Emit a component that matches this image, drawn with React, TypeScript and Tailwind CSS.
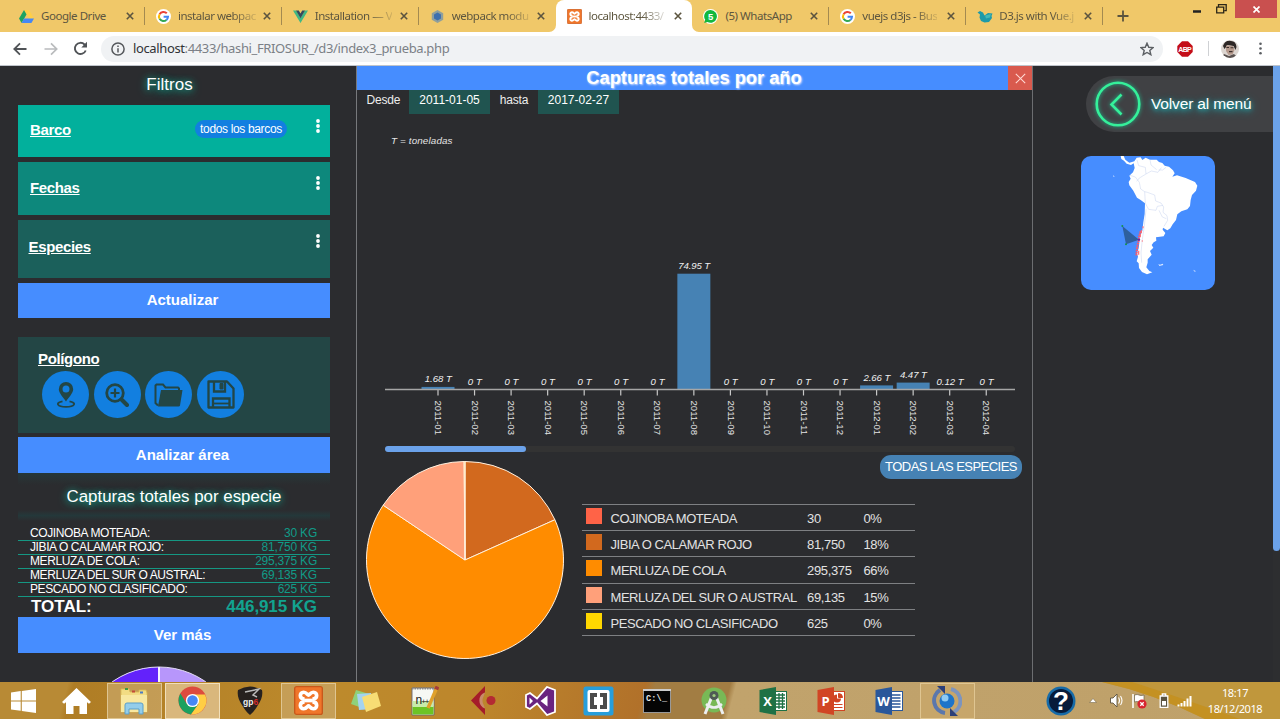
import React from "react";

const ARIAL = "font-['Liberation_Sans',Arial,sans-serif]";

/* ---------- browser chrome ---------- */

function GoogleIcon() {
  return (
    <svg width="15" height="15" viewBox="0 0 15 15">
      <circle cx="7.5" cy="7.5" r="7.5" fill="#fff" />
      <g fill="none" strokeWidth="2">
        <path d="M3.6 5.2A4.5 4.5 0 0 1 10.8 4.3" stroke="#ea4335" />
        <path d="M3.6 5.2A4.5 4.5 0 0 0 3.6 9.8" stroke="#fbbc05" />
        <path d="M3.6 9.8A4.5 4.5 0 0 0 10.4 10.9" stroke="#34a853" />
        <path d="M10.4 10.9A4.5 4.5 0 0 0 12 7.7H7.6" stroke="#4285f4" />
      </g>
    </svg>
  );
}

function DriveIcon() {
  return (
    <svg width="15" height="15" viewBox="0 0 15 15">
      <path d="M5 1h5l5 8.6h-5z" fill="#ffcf48" />
      <path d="M5 1l2.5 4.4L2.6 14 0 9.6z" fill="#1da362" />
      <path d="M5 9.6h10L12.4 14H2.6z" fill="#4687f4" />
    </svg>
  );
}

function VueIcon() {
  return (
    <svg width="15" height="15" viewBox="0 0 15 15">
      <path d="M0 1.5h3.2L7.5 9l4.3-7.5H15L7.5 14z" fill="#41b883" />
      <path d="M3 1.5h2.8l1.7 3 1.7-3H12L7.5 9.3z" fill="#35495e" />
    </svg>
  );
}

function WebpackIcon() {
  return (
    <svg width="15" height="15" viewBox="0 0 15 15">
      <path d="M7.5 1l5.7 3.2v6.6L7.5 14l-5.7-3.2V4.2z" fill="#8f9f9c" />
      <path d="M7.5 3.6l3.5 2v3.900l-3.500 2-3.500-2V5.600z" fill="#3e6fae" />
    </svg>
  );
}

function XamppIcon({ size }: { size: number }) {
  return (
    <svg width={size} height={size} viewBox="0 0 30 30">
      <rect x="0.700" y="0.700" width="28.600" height="28.600" rx="2" fill="#f0762a" stroke="#c9581a" strokeWidth="1.400" />
      <g fill="none" stroke="#fff" strokeWidth="3.800" strokeLinejoin="round">
        <path d="M11 13.500C5 13.500 5.500 6.500 10 6.500c3 0 4 3 5 3s2-3 5-3c4.500 0 5 7-1 7" />
        <path d="M11 16.500c-6 0-5.500 7-1 7 3 0 4-3 5-3s2 3 5 3c4.500 0 5-7-1-7" />
        <path d="M10.500 15h9" />
      </g>
    </svg>
  );
}

function WhatsIcon() {
  return (
    <svg width="15" height="15" viewBox="0 0 15 15">
      <circle cx="7.500" cy="7.500" r="7.500" fill="#fff" />
      <path d="M7.600 1a6.400 6.400 0 1 1-3.200 12L1.200 14l1-3.200A6.400 6.400 0 0 1 7.600 1z" fill="#12b83f" />
      <text x="7.600" y="11" textAnchor="middle" fontSize="9.500" fontWeight="700" fill="#fff" fontFamily="Liberation Sans">5</text>
    </svg>
  );
}

function BirdIcon() {
  return (
    <svg width="16" height="15" viewBox="0 0 16 15">
      <path d="M0.500 3.500L3 2l3 1.500 1.500 3L11 4l4.500 0.500-1 2.500 0.500 2-3 4-4.500 0.500L4 12 2.500 8.500 3 5.500z" fill="#1e9aa8" />
      <path d="M8 6.500l6-1.500-1 3.500-4 1z" fill="#45b9b6" />
    </svg>
  );
}

const tabs: { title: string; icon: React.ReactNode; active?: boolean; fade: boolean; sep: boolean }[] = [
  { title: "Google Drive", icon: <DriveIcon />, fade: false, sep: true },
  { title: "instalar webpac", icon: <GoogleIcon />, fade: true, sep: true },
  { title: "Installation — V", icon: <VueIcon />, fade: true, sep: true },
  { title: "webpack modu", icon: <WebpackIcon />, fade: true, sep: false },
  { title: "localhost:4433/", icon: <XamppIcon size={15} />, active: true, fade: true, sep: false },
  { title: "(5) WhatsApp", icon: <WhatsIcon />, fade: false, sep: true },
  { title: "vuejs d3js - Bus", icon: <GoogleIcon />, fade: true, sep: true },
  { title: "D3.js with Vue.j", icon: <BirdIcon />, fade: true, sep: true },
];

function TabStrip() {
  return (
    <div className="flex h-8 shrink-0 items-start bg-[#f0c869] pl-2">
      {tabs.map((t) => (
        <div
          key={t.title}
          className={
            t.active
              ? "relative flex h-8 w-[136.900px] shrink-0 items-center rounded-t-lg bg-white pl-[11px]"
              : "relative flex h-8 w-[136.900px] shrink-0 items-center pl-[11px]"
          }
        >
          <span className="flex w-[22px] shrink-0">{t.icon}</span>
          <span className="w-[77px] text-[11.500px] whitespace-nowrap text-[#5d563f]">
            <span
              className={
                t.fade
                  ? "inline-block tracking-[-0.480px] [mask-image:linear-gradient(to_right,black_70%,rgba(0,0,0,0.2))]"
                  : "inline-block tracking-[-0.450px]"
              }
            >
              {t.title}
            </span>
          </span>
          <svg width="8" height="8" viewBox="0 0 8 8" className="ml-2">
            <path d="M0.800 0.800l6.400 6.400M7.200 0.800L0.800 7.200" stroke="#5b543f" strokeWidth="1.600" />
          </svg>
          {t.sep && <span className="absolute top-[7px] right-0 h-[18px] w-px bg-[#a38a50]" />}
          {t.active && (
            <>
              <svg className="absolute bottom-0 left-[-7px]" width="7" height="7" viewBox="0 0 7 7">
                <path d="M7 0v7H0a7 7 0 0 0 7-7z" fill="#fff" />
              </svg>
              <svg className="absolute right-[-7px] bottom-0" width="7" height="7" viewBox="0 0 7 7">
                <path d="M0 0v7h7a7 7 0 0 1-7-7z" fill="#fff" />
              </svg>
            </>
          )}
        </div>
      ))}
      <svg width="12" height="12" viewBox="0 0 12 12" className="mt-[10px] ml-[14px]">
        <path d="M6 0.500v11M0.500 6h11" stroke="#5b543f" strokeWidth="1.800" />
      </svg>
      <div className="ml-auto flex h-[18px] items-center">
        <svg width="8" height="3" viewBox="0 0 8 3" className="mt-1 mr-[15px]">
          <path d="M0 1.500h8" stroke="#222" strokeWidth="2.500" />
        </svg>
        <svg width="11" height="10" viewBox="0 0 11 10" className="mr-2">
          <path d="M2.500 2.500V0.700h7.700v6H8.500M0.700 3.200h7v5.600h-7z" fill="none" stroke="#2b2618" strokeWidth="1.300" />
        </svg>
        <div className="flex h-[18px] w-[42px] items-center justify-center bg-[#c9504f]">
          <svg width="7" height="7" viewBox="0 0 7 7">
            <path d="M0.500 0.500l6 6M6.500 0.500l-6 6" stroke="#fff" strokeWidth="1.700" />
          </svg>
        </div>
        <div className="w-[3px]" />
      </div>
    </div>
  );
}

function Toolbar() {
  return (
    <div className="flex h-[34px] shrink-0 items-center border-b border-[#bfc4cb] bg-white pl-[13px]">
      <svg width="14" height="14" viewBox="0 0 14 14" fill="none" stroke="#505357" strokeWidth="1.800">
        <path d="M13.500 7H1.500M7 1.300L1.300 7 7 12.700" />
      </svg>
      <svg width="14" height="14" viewBox="0 0 14 14" className="ml-[17px]" fill="none" stroke="#b9bbbd" strokeWidth="1.700">
        <path d="M0.500 7h12M7 1.300L12.700 7 7 12.700" />
      </svg>
      <svg width="15" height="15" viewBox="0 0 15 15" className="ml-[15px]" fill="none">
        <path d="M12.700 9.500A5.600 5.600 0 1 1 11.500 3.500L13 5" stroke="#505357" strokeWidth="1.900" />
        <path d="M14 0.800v5.700H8.300z" fill="#505357" />
      </svg>
      <div className="ml-[13px] flex h-[26px] w-[1062px] items-center rounded-full bg-[#f0f2f4] pr-[9px] pl-[10px]">
        <svg width="14" height="14" viewBox="0 0 14 14" fill="none" stroke="#55585c" strokeWidth="1.500">
          <circle cx="7" cy="7" r="6.100" />
          <path d="M7 6.200v4.300M7 3.400v1.600" />
        </svg>
        <span className="ml-2 text-[13px] whitespace-nowrap tracking-[-0.370px] text-[#7b8086]">
          <span className="text-[#303236]">localhost</span>:4433/hashi_FRIOSUR_/d3/index3_prueba.php
        </span>
        <svg width="14" height="14" viewBox="0 0 24 24" className="ml-auto" fill="none" stroke="#5c6064" strokeWidth="2.400">
          <path d="M12 2l3 7 7.500.6-5.700 4.900 1.800 7.300L12 17.900l-6.600 3.900 1.800-7.300L1.500 9.600 9 9z" />
        </svg>
      </div>
      <svg width="16" height="16" viewBox="0 0 16 16" className="ml-[14px]">
        <path d="M5 0.300h6L15.700 5v6L11 15.700H5L0.300 11V5z" fill="#c40d18" />
        <text x="8" y="10.600" textAnchor="middle" fontSize="7" fontWeight="700" fill="#fff" fontFamily="Liberation Sans" textLength="13.500">ABP</text>
      </svg>
      <div className="ml-[15px] h-[15px] w-px bg-[#cfd1d4]" />
      <svg width="18" height="18" viewBox="0 0 18 18" className="ml-[12px]">
        <defs>
          <clipPath id="avatar"><circle cx="9" cy="9" r="9" /></clipPath>
        </defs>
        <g clipPath="url(#avatar)">
          <rect width="18" height="18" fill="#dcd5d0" />
          <path d="M2 6q2-6 8-5 5 0 5.500 6l-1 3-2-4-6-1-3 4z" fill="#2e2726" />
          <path d="M5 5.500l7 0.500 1.500 4-2 4.500-4 0.500-2.500-4z" fill="#b69a8d" />
          <path d="M5.500 7.500h2.500M9.500 7.700h3M8 11.600h3.500" stroke="#3c302d" strokeWidth="1.100" />
          <path d="M0 18l3-4 5 2 5-2 4 4z" fill="#5a5250" />
        </g>
      </svg>
      <svg width="3" height="13" viewBox="0 0 3 13" className="ml-[20px]" fill="#5b5e62">
        <circle cx="1.500" cy="1.700" r="1.300" /><circle cx="1.500" cy="6.500" r="1.300" /><circle cx="1.500" cy="11.300" r="1.300" />
      </svg>
    </div>
  );
}

/* ---------- left panel ---------- */

function Dots() {
  return (
    <svg width="4" height="14" viewBox="0 0 4 14" fill="#fff">
      <circle cx="2" cy="2" r="1.900" /><circle cx="2" cy="7" r="1.900" /><circle cx="2" cy="12" r="1.900" />
    </svg>
  );
}

const heading = "text-center text-white [text-shadow:0_0_6px_#159a86,0_2px_10px_#16a08a]";
const label = "text-[15px] leading-[18px] font-bold tracking-[-0.350px] text-white underline";
const bigButton =
  "flex shrink-0 items-center justify-center bg-[#468dff] pl-[17px] text-[15px] font-bold text-white";

const catches = [
  ["COJINOBA MOTEADA:", "30 KG"],
  ["JIBIA O CALAMAR ROJO:", "81,750 KG"],
  ["MERLUZA DE COLA:", "295,375 KG"],
  ["MERLUZA DEL SUR O AUSTRAL:", "69,135 KG"],
  ["PESCADO NO CLASIFICADO:", "625 KG"],
];

function PolyButton({ children }: { children: React.ReactNode }) {
  return (
    <div className="flex size-[47px] items-center justify-center rounded-full bg-[#127fe0]">{children}</div>
  );
}

function LeftPanel() {
  return (
    <div className="flex w-[357px] shrink-0 flex-col overflow-hidden border-r border-[#77797c] pr-[26px] pl-[18px]">
      <div className={`${heading} h-[39px] shrink-0 pt-[7px] pr-[9px] text-[17px] leading-6`}>Filtros</div>
      <div className="flex h-[52px] shrink-0 items-start bg-[#02b09c] pr-[10px] pl-3">
        <b className={`${label} mt-[16px]`}>Barco</b>
        <span className="mt-[15px] mr-[29px] ml-auto flex h-[18px] w-[92px] items-center justify-center rounded-full bg-[#127fe0] text-[12px] tracking-[-0.350px] whitespace-nowrap text-white">todos los barcos</span>
        <span className="mt-[14px]"><Dots /></span>
      </div>
      <div className="mt-[5px] flex h-[53px] shrink-0 items-start justify-between bg-[#0d887c] pr-[10px] pl-3">
        <b className={`${label} mt-[17px]`}>Fechas</b>
        <span className="mt-[14px]"><Dots /></span>
      </div>
      <div className="mt-[5px] flex h-[58px] shrink-0 items-start justify-between bg-[#1b605b] pr-[10px] pl-[10.500px]">
        <b className={`${label} mt-[18px]`}>Especies</b>
        <span className="mt-[14px]"><Dots /></span>
      </div>
      <div className={`${bigButton} mt-[5px] h-[35px]`}>Actualizar</div>
      <div className="mt-[19px] h-[96px] shrink-0 bg-[#234645] pt-[13px] pl-5">
        <b className={`${label} block`}>Polígono</b>
        <div className="mt-[3px] ml-1 flex gap-[4.700px]">
          <PolyButton>
            <svg width="18" height="26" viewBox="0 0 18 26">
              <path fillRule="evenodd" d="M9 0a7.200 7.200 0 0 1 7.200 7.200c0 4-4.700 8.300-7.200 12.300C6.500 15.500 1.800 11.200 1.800 7.200A7.200 7.200 0 0 1 9 0zm0 3.600a3.500 3.500 0 1 0 0 7 3.500 3.500 0 0 0 0-7z" fill="#234645" />
              <path d="M5.500 19.300C-2 20.800 0 24.800 9 24.800s11-4 3.500-5.500" fill="none" stroke="#234645" strokeWidth="1.800" />
            </svg>
          </PolyButton>
          <PolyButton>
            <svg width="24" height="24" viewBox="0 0 24 24" fill="none" stroke="#234645">
              <circle cx="10" cy="10" r="8.300" strokeWidth="2.800" />
              <path d="M10 5.500v9M5.500 10h9" strokeWidth="2.200" />
              <path d="M16.500 16.500l5.500 5.500" strokeWidth="4" strokeLinecap="round" />
            </svg>
          </PolyButton>
          <PolyButton>
            <svg width="29" height="24" viewBox="0 0 29 24">
              <path d="M4 22.500L1.500 20V2.500l1-1H9l2.500 3H24l1 1V8" fill="none" stroke="#234645" strokeWidth="2" />
              <path d="M7 7h21.500L26 22.500q-.2 1-1.500 1H4z" fill="#234645" />
            </svg>
          </PolyButton>
          <PolyButton>
            <svg width="28" height="29" viewBox="0 0 28 29" fill="none" stroke="#234645" strokeWidth="2.300">
              <path d="M1.500 1.500H20l6.500 7v19h-25z" strokeLinejoin="round" />
              <path d="M7 1.500v10h11v-10" />
              <path d="M13 3.500h3v5.500h-3z" fill="#234645" strokeWidth="1" />
              <path d="M6 27.500V18.500H22.500v9" />
              <path d="M6 23.500h16.500" strokeWidth="1.800" />
            </svg>
          </PolyButton>
        </div>
      </div>
      <div className={`${bigButton} mt-1 h-9`}>Analizar área</div>
      <div className="flex h-[54px] shrink-0 flex-col">
        <div className="h-[12px] bg-linear-to-b from-[#253738] to-[#2b2c2f]" />
        <div className={`${heading} text-[16.900px] leading-[24px] whitespace-nowrap`}>Capturas totales por especie</div>
        <div className="mt-px h-[11px] bg-linear-to-b from-[#2b2c2f] via-[#24383a] to-[#2b2c2f]" />
      </div>
      {catches.map(([name, kg]) => (
        <div key={name} className="flex h-[14px] shrink-0 justify-between border-b border-[#159783] pr-[13px] pl-3 text-[12px] leading-[13px] whitespace-nowrap">
          <span className="tracking-[-0.400px] text-white">{name}</span>
          <span className="tracking-[-0.220px] text-[#119b88]">{kg}</span>
        </div>
      ))}
      <div className="flex h-5 shrink-0 justify-between pr-[13px] pl-[13px] text-[17px] leading-[19px] font-bold whitespace-nowrap">
        <span className="text-white">TOTAL:</span>
        <span className="tracking-[-0.100px] text-[#12a38f]">446,915 KG</span>
      </div>
      <div className={`${bigButton} h-9 pl-[14px]`}>Ver más</div>
      <svg width="312" height="30" viewBox="0 0 312 30" className="mt-[13px] shrink-0">
        <circle cx="141" cy="82" r="81" fill="#b796fb" />
        <path d="M141 82V1a81 81 0 0 0-81 81z" fill="#6322fb" />
        <circle cx="141" cy="82" r="81" fill="none" stroke="#e4dcf8" strokeWidth="1" />
        <path d="M141 1v40" stroke="#f5f0ff" strokeWidth="2" />
      </svg>
    </div>
  );
}

/* ---------- centre panel ---------- */

const bars = [
  { m: "2011-01", v: 1.68 }, { m: "2011-02", v: 0 }, { m: "2011-03", v: 0 }, { m: "2011-04", v: 0 },
  { m: "2011-05", v: 0 }, { m: "2011-06", v: 0 }, { m: "2011-07", v: 0 }, { m: "2011-08", v: 74.95 },
  { m: "2011-09", v: 0 }, { m: "2011-10", v: 0 }, { m: "2011-11", v: 0 }, { m: "2011-12", v: 0 },
  { m: "2012-01", v: 2.66 }, { m: "2012-02", v: 4.47 }, { m: "2012-03", v: 0.12 }, { m: "2012-04", v: 0 },
];

function BarChart() {
  const axis = 274.500;
  return (
    <svg width="630" height="326" viewBox="0 0 630 326" className="ml-[28px] block shrink-0 font-['Liberation_Sans',Arial,sans-serif]">
      <text x="6" y="29" fontSize="9.800" fontStyle="italic" fill="#e6e6e6" textLength="61.500">T = toneladas</text>
      {bars.map((b, i) => {
        const x = 53 + i * 36.550;
        const h = b.v * 1.545;
        return (
          <g key={b.m}>
            <rect x={x - 16.500} y={axis - h} width="33" height={h} fill="#4682b4" />
            <text x={x + 0.300} y={axis - h - 4.700} fontSize="9.600" fontStyle="italic" fill="#f0f0f0" textAnchor="middle"
              textLength={b.v === 0 ? 14 : b.v > 10 ? 32 : 27}>{`${b.v} T`}</text>
            <path d={`M${x} ${axis}v6`} stroke="#c8c8c8" strokeWidth="1.200" />
            <text transform={`translate(${x - 2.900} 285.500) rotate(90)`} fontSize="9.500" fill="#e4e4e4" textLength="34.500">{b.m}</text>
          </g>
        );
      })}
      <path d={`M0 ${axis}h630`} stroke="#a6a6a6" strokeWidth="1.300" />
    </svg>
  );
}

const species = [
  { name: "COJINOBA MOTEADA", kg: 30, pct: "0%", fill: "#ff6347", sw: "bg-[#ff6347]" },
  { name: "JIBIA O CALAMAR ROJO", kg: 81750, pct: "18%", fill: "#d2691e", sw: "bg-[#d2691e]" },
  { name: "MERLUZA DE COLA", kg: 295375, pct: "66%", fill: "#ff8c00", sw: "bg-[#ff8c00]" },
  { name: "MERLUZA DEL SUR O AUSTRAL", kg: 69135, pct: "15%", fill: "#ffa07a", sw: "bg-[#ffa07a]" },
  { name: "PESCADO NO CLASIFICADO", kg: 625, pct: "0%", fill: "#ffd700", sw: "bg-[#ffd700]" },
];

function Pie() {
  const total = species.reduce((s, e) => s + e.kg, 0);
  let acc = 0;
  return (
    <svg width="200" height="200" viewBox="-100 -100 200 200" className="mt-[8px] ml-[8px] shrink-0">
      {species.map((s) => {
        const a0 = (acc / total) * 2 * Math.PI;
        acc += s.kg;
        const a1 = (acc / total) * 2 * Math.PI;
        const r = 98.500;
        const large = a1 - a0 > Math.PI ? 1 : 0;
        return (
          <path
            key={s.name}
            d={`M0 0L${r * Math.sin(a0)} ${-r * Math.cos(a0)}A${r} ${r} 0 ${large} 1 ${r * Math.sin(a1)} ${-r * Math.cos(a1)}Z`}
            fill={s.fill}
            stroke="#fff1e0"
            strokeWidth="1"
            strokeLinejoin="round"
          />
        );
      })}
    </svg>
  );
}

function CenterPanel() {
  return (
    <div className="flex w-[676px] shrink-0 flex-col overflow-hidden border-r border-[#6c6e71]">
      <div className="flex h-6 shrink-0 items-center bg-[#468dff] pl-[23px]">
        <b className="flex-1 text-center text-[18.300px] leading-[22px] text-white [text-shadow:1px_1px_2px_#d8e4ff]">Capturas totales por año</b>
        <div className="flex h-6 w-[24px] items-center justify-center bg-[#d95a4e]">
          <svg width="11" height="11" viewBox="0 0 11 11">
            <path d="M0.800 0.800l9.400 9.400M10.200 0.800L0.800 10.200" stroke="#ffd9d4" strokeWidth="1.100" />
          </svg>
        </div>
      </div>
      <div className="flex h-[25px] shrink-0 items-start pl-[9.500px] text-[12px] leading-[20px] text-[#ededed]">
        <span className="w-[42.500px] tracking-[-0.200px]">Desde</span>
        <span className="h-6 w-[81px] bg-[#205450] text-center text-white">2011-01-05</span>
        <span className="w-[48px] text-center tracking-[-0.200px]">hasta</span>
        <span className="h-6 w-[81px] bg-[#205450] text-center text-white">2017-02-27</span>
      </div>
      <BarChart />
      <div className="mt-[5px] ml-[28px] h-[6px] w-[630px] shrink-0 rounded-full bg-[#333333]">
        <div className="h-[6px] w-[141px] rounded-full bg-[#6ba2ea]" />
      </div>
      <div className="flex">
        <Pie />
        <div className="ml-[17px] flex flex-1 flex-col">
          <div className="mt-[3px] mr-[10px] flex h-[24px] w-[142px] items-center justify-center self-end rounded-[11px] bg-[#4682b4] text-[13px] tracking-[-0.520px] whitespace-nowrap text-white">TODAS LAS ESPECIES</div>
          <div className="mt-[25px] flex w-[333px] flex-col border-t border-[#7e8083]">
            {species.map((s) => (
              <div key={s.name} className="flex h-[26.200px] items-start border-b border-[#7e8083] pl-1 text-[13px] leading-[28px] whitespace-nowrap text-[#e2e2e2]">
                <span className={`${s.sw} mt-[3px] size-[16px]`} />
                <span className="ml-[8.500px] w-[196.500px] tracking-[-0.450px]">{s.name}</span>
                <span className="w-[56.500px] tracking-[-0.350px]">{s.kg.toLocaleString("en-US")}</span>
                <span className="tracking-[-0.400px]">{s.pct}</span>
              </div>
            ))}
          </div>
        </div>
      </div>
    </div>
  );
}

/* ---------- right panel ---------- */

function MapCard() {
  return (
    <svg width="134" height="134" viewBox="213 288 402 402" className="rounded-[10px] bg-[#468dff]">
      <path
        fill="#fff"
        d="M332 288L341 288 346 299 358 308 366 306 373 304 380 293 392 292 397 300 407 293 420 299 440 299 447 306 457 309 464 317 477 320 489 331 494 340 487 350 501 346 527 354 541 360 555 366 562 377 558 392 546 405 542 420 540 438 532 448 514 454 502 463 498 480 488 493 481 505 472 511 459 503 458 509 466 519 461 529 438 532 439 542 431 547 425 555 430 563 420 573 425 584 413 598 413 608 409 622 418 633 427 637 411 643 396 636 387 624 386 610 380 604 384 590 381 580 386 565 388 548 389 530 397 512 400 487 404 462 405 430 392 420 381 413 370 392 358 376 356 366 362 356 358 347 369 337 374 324 371 310 363 315 350 311 342 302 334 297Z"
      />
      <g fill="none" stroke="#c6d3ee" strokeWidth="1.500">
        <path d="M381 300l5 17 20 5 2 20-20 12-8 10M360 346l16 5 12 16 4 20 12 8 8 2 22 8 3 18 16 6 8 12-2 16 12 10 2 14-11 18" />
        <path d="M408 342l16-9 20 4 10-14M446 330l12 0 10-8M404 395l2 35 10 18 22 3 4-12 17-3M408 448l-5 50-6 40-4 40 2 30M447 451l10 20 12 5M420 299l3 16 17 14" />
      </g>
      <path d="M392 514L387 530 385 545 381 565 379 586" fill="none" stroke="#ff5964" strokeWidth="6" strokeDasharray="5 2" />
      <path d="M399 499v6M394 510v10M395 543h4M391 522v10M386 572v12" stroke="#ff6b74" strokeWidth="3.500" />
      <path d="M337 498L387 539 348 553Z" fill="#2e609e" />
      <circle cx="337" cy="498" r="3" fill="#179448" />
      <circle cx="348" cy="553" r="3" fill="#179448" />
      <circle cx="387" cy="539" r="3.500" fill="#7320a8" />
      <path d="M445 612l5 2 8-3 2 4-12 3zM309 346l5 3-3 2zM549 629l8 4-2 3z" fill="#dce9ff" />
    </svg>
  );
}

function RightPanel() {
  return (
    <div className="flex flex-1">
      <div className="flex flex-1 flex-col">
        <div className="mt-[10px] ml-[53px] flex h-[56px] items-center rounded-l-full bg-[#404144] pl-2">
          <svg width="48" height="48" viewBox="0 0 48 48" className="overflow-visible [filter:drop-shadow(0_0_2px_#1fb98c)]" fill="none" stroke="#35f09a">
            <circle cx="24" cy="24" r="21.300" strokeWidth="2.600" />
            <path d="M27.500 14.500L17.500 24.500l10 10" strokeWidth="2.600" />
          </svg>
          <span className="ml-[9px] text-[15.500px] tracking-[-0.150px] whitespace-nowrap text-white [text-shadow:0_1px_4px_#1fb3b8,0_2px_8px_#1fb3b8]">Volver al menú</span>
        </div>
        <div className="mt-[24px] ml-[48px]"><MapCard /></div>
      </div>
      <div className="w-[7px] bg-[#2d2e30]">
        <div className="h-[485px] rounded-b-full bg-[#6ba2ea]" />
      </div>
    </div>
  );
}

/* ---------- taskbar ---------- */

function OfficeIcon({ letter, color }: { letter: string; color: string }) {
  return (
    <svg width="28" height="28" viewBox="0 0 28 28">
      <rect x="14" y="4.500" width="13.500" height="19" fill="#fff" stroke={color} strokeWidth="1" />
      {letter === "X" && <path d="M17 8h9M17 11h9M17 14h9M17 17h9M17 20h9M20 6v16M23.500 6v16" stroke={color} strokeWidth="1.300" />}
      {letter === "W" && <path d="M17 8h8.500M17 11h8.500M17 14h8.500M17 17h8.500M17 20h8.500" stroke={color} strokeWidth="1.400" />}
      {letter === "P" && (
        <>
          <path d="M20 7.500v4h4a4 4 0 1 1-4-4z" fill={color} />
          <path d="M21.500 6.500a4 4 0 0 1 4 4h-4zM17 17.500h8.500M17 20.500h8.500" fill={color} stroke={color} strokeWidth="1" />
        </>
      )}
      <path d="M0.500 3L17 0v28L0.500 25z" fill={color} />
      <text x="8.500" y="18.800" textAnchor="middle" fontSize="13" fontWeight="700" fill="#fff" fontFamily="Open Sans">{letter}</text>
    </svg>
  );
}

function TaskCell({ children, open, hot }: { children: React.ReactNode; open?: boolean; hot?: boolean }) {
  return (
    <div className="flex w-[58.100px] shrink-0 items-center justify-center">
      <div
        className={
          hot
            ? "flex h-[36px] w-[55px] items-center justify-center border border-[#f1dfba] bg-[#d9b77c]"
            : open
              ? "flex h-[36px] w-[55px] items-center justify-center border border-[#dfc591] bg-[#cba869]/70"
              : "flex h-[36px] w-[55px] items-center justify-center"
        }
      >
        {children}
      </div>
    </div>
  );
}

function Taskbar() {
  return (
    <div className="relative flex h-[37px] shrink-0 bg-[#b98429] bg-[linear-gradient(105deg,#b88a35_0,#b88a35_66px,#af7d25_72px,#bd8a2c_330px,#bd862c_470px,#b1712a_624px,#a27d43_634px,#a27d43_706px,#c1a36c_712px,#bfa16a_1100px,#c1a36c_1280px)]">
      <svg className="absolute top-0 right-0" width="190" height="37" viewBox="0 0 190 37">
        <path d="M12 0H190V37H115Q65 12 12 0z" fill="#c0973c" />
        <path d="M12 0H42Q80 12 150 37H115Q65 12 12 0z" fill="#c49122" />
      </svg>
      <div className="relative flex w-[47px] items-center justify-center">
        <svg width="25" height="24" viewBox="0 0 25 24" fill="#fff">
          <path d="M0 3.500l9.700-1.400v9.300H0zM10.800 2L25 0v11.400H10.800zM0 12.500h9.700v9.300L0 20.500zM10.800 12.500H25V24l-14.200-2z" />
        </svg>
      </div>
      <div className="relative flex w-[58px] items-center justify-center">
        <svg width="29" height="26" viewBox="0 0 29 26" fill="#fff">
          <path d="M14.500 0L29 14l-2 1.800-2-1.600V26h-7.500v-8h-6v8H4V14.200l-2 1.600L0 14z" />
        </svg>
      </div>
      <TaskCell open>
        <svg width="30" height="29" viewBox="0 0 30 29">
          <path d="M2 3h8l1 3h9V4h7l1 3v19H2z" fill="#f2dc83" stroke="#d9b954" strokeWidth="0.800" />
          <path d="M6 2h3v2H6z" fill="#3b9a45" /><path d="M13 4.500h3v2h-3z" fill="#c44a3b" /><path d="M21 5.500h3v2h-3z" fill="#4a7bc4" />
          <path d="M2 9h26v17H2z" fill="#f8e8a0" />
          <path d="M6 28V19q0-2 2-2h14q2 0 2 2v9h-4v-5H10v5z" fill="#93cdea" stroke="#5b9fc9" strokeWidth="1" />
        </svg>
      </TaskCell>
      <TaskCell hot>
        <svg width="29" height="29" viewBox="0 0 29 29">
          <circle cx="14.500" cy="14.500" r="14" fill="#dd4b3e" />
          <path d="M2.400 7.500A14 14 0 0 0 13 28.400L20.500 18 8.500 17.500z" fill="#1ba15f" />
          <path d="M13 28.400A14 14 0 0 0 27 8.500H14.500l6 9.500z" fill="#ffce44" />
          <circle cx="14.500" cy="14.500" r="6.600" fill="#fff" />
          <circle cx="14.500" cy="14.500" r="5.300" fill="#4687f4" />
        </svg>
      </TaskCell>
      <TaskCell>
        <svg width="26" height="29" viewBox="0 0 26 29">
          <path d="M1 4Q13-3 25 4q1.500 7-4 15-4 7-8 10Q9 26 5 19-.5 11 1 4z" fill="#26211f" />
          <path d="M8 6l14-3-6 6 4 2" stroke="#bbb" strokeWidth="1.500" fill="none" />
          <text x="6" y="19" fontSize="8.500" fontWeight="700" fill="#f0f0f0" fontFamily="Liberation Sans">gp<tspan fill="#d12b2b">6</tspan></text>
        </svg>
      </TaskCell>
      <TaskCell open><XamppIcon size={29} /></TaskCell>
      <TaskCell>
        <svg width="30" height="26" viewBox="0 0 30 26">
          <path d="M5 2l13 4-4 15L0 16z" fill="#8fd07a" />
          <path d="M6 6l14-1 2 16-14 1z" fill="#a5d3f0" />
          <path d="M11 9l15-5 4 14-15 6z" fill="#f8dd74" />
        </svg>
      </TaskCell>
      <TaskCell>
        <svg width="29" height="30" viewBox="0 0 29 30">
          <path d="M2 2h22v27H2z" fill="#f6f8f4" stroke="#667" strokeWidth="0.900" />
          <path d="M2.500 20h21v8.500h-21z" fill="#6cc424" />
          <path d="M2.500 15h21v6h-21z" fill="#c8ebaa" />
          <path d="M2 2.500h22" stroke="#888" strokeWidth="2" strokeDasharray="1.500 1" />
          <text x="5.500" y="17.500" fontSize="8" fill="#222" fontFamily="Liberation Sans" textLength="14">
            <tspan fontSize="12">n</tspan>++
          </text>
          <path d="M26.500 2.500L18 22" stroke="#e0a12b" strokeWidth="3.400" /><path d="M27.500 0.500l-1.300 3" stroke="#a53c3c" strokeWidth="4" />
        </svg>
      </TaskCell>
      <TaskCell>
        <svg width="27" height="29" viewBox="0 0 27 29" className="ml-1">
          <path d="M14 0v6.500q-5 3-5 8t5 8V29L0 14.500z" fill="#a51c2a" />
          <path d="M14 6.500a8.500 8.500 0 0 0 0 16l-1.500-4q-2-4 0-8z" fill="#c98a6a" />
          <circle cx="20" cy="14.500" r="4.500" fill="#b42a33" />
        </svg>
      </TaskCell>
      <TaskCell>
        <svg width="31" height="30" viewBox="0 0 31 30">
          <path d="M1 9l4-2 7 5.500L22 1l8 3v22l-8 3-10-11.500L5 23l-4-2z" fill="#6a2480" stroke="#fff" strokeWidth="1.800" />
          <path d="M4.500 11.500v7l3.500-3.500zM22.500 9.500v11L15.500 15z" fill="#fff" />
        </svg>
      </TaskCell>
      <TaskCell>
        <svg width="31" height="30" viewBox="0 0 31 30">
          <rect x="0.500" y="0.500" width="30" height="29" rx="2.500" fill="#279edb" />
          <rect x="4.500" y="4" width="22" height="22" rx="2" fill="#fff" />
          <path d="M7 7h7v4h-3v8h3v4H7zM24 7h-7v4h3v8h-3v4h7z" fill="#4b4b4b" />
        </svg>
      </TaskCell>
      <TaskCell>
        <svg width="28" height="24" viewBox="0 0 28 24">
          <rect x="0.500" y="0.500" width="27" height="23" fill="#050505" stroke="#999" strokeWidth="1" />
          <path d="M0 1h28" stroke="#ccc" strokeWidth="2" />
          <text x="3" y="11.500" fontSize="8.500" fontWeight="700" fill="#e8e8e8" fontFamily="Liberation Mono" textLength="21">C:\_</text>
        </svg>
      </TaskCell>
      <TaskCell>
        <svg width="27" height="28" viewBox="0 0 27 28">
          <circle cx="13" cy="13" r="12.500" fill="#78b956" />
          <path d="M11.500 8L4 27M14.500 8L22 27" stroke="#eceff0" strokeWidth="3" />
          <path d="M5 17q8 7 16 0" fill="none" stroke="#eceff0" strokeWidth="2.600" />
          <circle cx="13" cy="8.500" r="4.500" fill="#4f5a55" /><circle cx="13" cy="8.500" r="1.600" fill="#9ecb7f" />
        </svg>
      </TaskCell>
      <TaskCell><OfficeIcon letter="X" color="#1f7145" /></TaskCell>
      <TaskCell><OfficeIcon letter="P" color="#d14524" /></TaskCell>
      <TaskCell><OfficeIcon letter="W" color="#2a579a" /></TaskCell>
      <TaskCell open>
        <svg width="30" height="30" viewBox="0 0 30 30">
          <circle cx="15" cy="15" r="7.500" fill="#1d74c9" /><circle cx="13" cy="12" r="3.500" fill="#8fcaf3" />
          <path d="M13 27A12.500 12.500 0 0 1 8 4" fill="none" stroke="#5b77ac" strokeWidth="4" />
          <path d="M5 0h8v8z" fill="#2c3f78" />
          <path d="M19 3a12.500 12.500 0 0 1 3 23" fill="none" stroke="#7d94bd" strokeWidth="4" />
          <path d="M26 30h-8v-8z" fill="#2c3f78" />
        </svg>
      </TaskCell>
      <div className="relative ml-auto flex items-center text-white">
        <svg width="30" height="30" viewBox="0 0 30 30" className="mr-[13px]">
          <circle cx="15" cy="15" r="14.500" fill="#176ba8" />
          <circle cx="15" cy="15" r="12" fill="#071b3b" />
          <text x="15" y="24" textAnchor="middle" fontSize="26" fontWeight="700" fill="#fff" fontFamily="Liberation Sans">?</text>
        </svg>
        <svg width="8" height="5" viewBox="0 0 8 5" className="mr-[13px]"><path d="M4 0.500l3.500 4h-7z" fill="#fff" stroke="#796b4f" strokeWidth="0.600" /></svg>
        <svg width="13" height="15" viewBox="0 0 13 15" className="mr-[8px]">
          <path d="M0.500 5h2.500l4-4v13l-4-4H0.500z" fill="#fff" stroke="#5c5240" strokeWidth="0.900" />
          <path d="M8.500 4.500q2 3 0 6M10.500 3q3 4.500 0 9" fill="none" stroke="#fff" strokeWidth="1.100" />
        </svg>
        <svg width="16" height="16" viewBox="0 0 16 16" className="mr-[12px]">
          <path d="M2 1v14" stroke="#fff" strokeWidth="1.600" /><path d="M3.500 2q3-1 4.500 0t5 0v7q-3 1-5 0t-4.500 0z" fill="#fff" stroke="#6a6048" strokeWidth="0.700" />
          <circle cx="11" cy="11" r="4.600" fill="#d8232f" /><path d="M9.300 9.300l3.400 3.400M12.700 9.300l-3.400 3.400" stroke="#fff" strokeWidth="1.300" />
        </svg>
        <svg width="10" height="15" viewBox="0 0 10 15" className="mr-[8px]">
          <path d="M1.200 3h7.600v11.300H1.200zM3.300 1h3.400v2H3.300z" fill="#5a533f" stroke="#fff" strokeWidth="1.300" />
          <path d="M3 8h4v4.500H3z" fill="#fff" />
        </svg>
        <svg width="15" height="12" viewBox="0 0 15 12" className="mr-[14px]">
          <path d="M1.500 11.500v-2M4.500 11.500V8M7.500 11.500V6M10.500 11.500V3.500M13.500 11.500V1" stroke="#fff" strokeWidth="2" />
        </svg>
        <div className="mt-[1px] mr-[16px] w-[58px] text-center text-[11px] leading-[16px] tracking-[-0.400px] whitespace-nowrap">
          <div>18:17</div>
          <div>18/12/2018</div>
        </div>
      </div>
    </div>
  );
}

export default function App() {
  return (
    <div className="flex h-[719px] w-[1280px] flex-col overflow-hidden bg-[#2b2c2f] font-['Noto_Sans','Open_Sans',sans-serif]">
      <TabStrip />
      <Toolbar />
      <div className={`${ARIAL} flex h-[616px] shrink-0 overflow-hidden`}>
        <LeftPanel />
        <CenterPanel />
        <RightPanel />
      </div>
      <Taskbar />
    </div>
  );
}
